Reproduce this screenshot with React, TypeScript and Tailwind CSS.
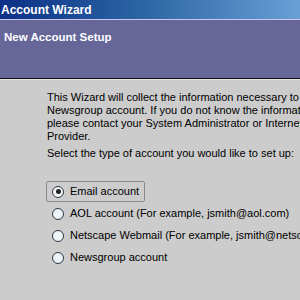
import React from "react";

const options = [
  "Email account",
  "AOL account (For example, jsmith@aol.com)",
  "Netscape Webmail (For example, jsmith@netscape.net)",
  "Newsgroup account",
];

const Radio = ({ checked }: { checked: boolean }) => (
  <span className="w-[12px] h-[12px] rounded-full border border-[#333344] bg-[#eef6f8] flex items-center justify-center shrink-0">
    {checked && <span className="w-[5px] h-[5px] rounded-full bg-[#222222]" />}
  </span>
);

export default function App() {
  return (
    <div
      className="w-[300px] h-[300px] overflow-hidden bg-[#cccccc] flex flex-col"
      style={{ fontFamily: "'Liberation Sans', Arial, sans-serif" }}
    >
      {/* title bar */}
      <div className="h-[19px] shrink-0 bg-gradient-to-r from-[#0e2f86] via-[#2f68a6] to-[#6a9fd6] flex items-center pl-[1px]">
        <span className="text-white font-bold text-[12px] leading-none">Account Wizard</span>
      </div>
      <div className="h-[1px] bg-[#c8c8ee] shrink-0" />
      {/* header */}
      <div className="h-[58px] shrink-0 bg-[#666699] pl-[4px] pt-[11px]">
        <span className="text-white font-bold text-[11.5px] leading-[13px] block">New Account Setup</span>
      </div>
      <div className="h-[1px] bg-[#111111] shrink-0" />
      <div className="h-[1px] bg-[#e4e4e4] shrink-0" />
      {/* body */}
      <div className="pl-[47px] pt-[11px] text-[11px] text-black leading-[13px] whitespace-nowrap">
        <p>This Wizard will collect the information necessary to set up a Mail or</p>
        <p>Newsgroup account. If you do not know the information requested,</p>
        <p>please contact your System Administrator or Internet Service</p>
        <p>Provider.</p>
        <p className="mt-[4px]">Select the type of account you would like to set up:</p>
        <div className="mt-[21px] flex flex-col gap-[1px]">
          {options.map((o, i) => (
            <div
              key={o}
              className={
                "flex items-center gap-[6px] h-[21px] pl-[5px] pr-[5px] w-fit -ml-[1px] rounded-[2px] " +
                (i === 0 ? "border border-[#888888]" : "border border-transparent")
              }
            >
              <Radio checked={i === 0} />
              <span>{o}</span>
            </div>
          ))}
        </div>
      </div>
    </div>
  );
}
